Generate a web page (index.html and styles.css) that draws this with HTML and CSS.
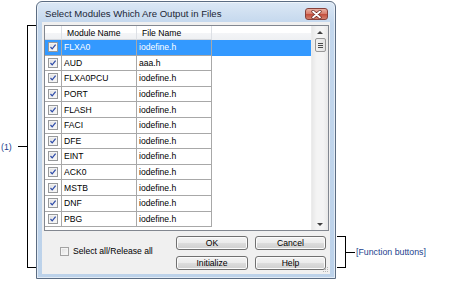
FILE: index.html
```html
<!DOCTYPE html>
<html lang="en">
<head>
  <meta charset="UTF-8" />
  <title>Select Modules Which Are Output in Files</title>
  <link rel="stylesheet" href="styles.css">
</head>
<body>
  <div class="page">
    <div class="note-left">
      <span class="note-text">(1)</span>
      <span class="tick"></span>
      <span class="bracket bracket-left"></span>
    </div>

    <div class="dialog">
      <div class="titlebar">
        <span class="title">Select Modules Which Are Output in Files</span>
        <span class="close-btn">
          <svg width="11" height="9" viewBox="0 0 11 9">
            <path d="M2 1.5 L9 7.5 M9 1.5 L2 7.5" stroke="#6b2a24" stroke-width="3.2" stroke-linecap="round"/>
            <path d="M2 1.5 L9 7.5 M9 1.5 L2 7.5" stroke="#ffffff" stroke-width="1.8" stroke-linecap="round"/>
          </svg>
        </span>
      </div>

      <div class="client">
        <div class="listbox">
          <div class="grid">
            <div class="row head">
              <span class="cell chk"></span>
              <span class="cell">Module Name</span>
              <span class="cell">File Name</span>
            </div>
            <div class="row selected">
              <span class="cell chk"><span class="check on"></span></span>
              <span class="cell">FLXA0</span>
              <span class="cell">iodefine.h</span>
            </div>
            <div class="row">
              <span class="cell chk"><span class="check on"></span></span>
              <span class="cell">AUD</span>
              <span class="cell">aaa.h</span>
            </div>
            <div class="row">
              <span class="cell chk"><span class="check on"></span></span>
              <span class="cell">FLXA0PCU</span>
              <span class="cell">iodefine.h</span>
            </div>
            <div class="row">
              <span class="cell chk"><span class="check on"></span></span>
              <span class="cell">PORT</span>
              <span class="cell">iodefine.h</span>
            </div>
            <div class="row">
              <span class="cell chk"><span class="check on"></span></span>
              <span class="cell">FLASH</span>
              <span class="cell">iodefine.h</span>
            </div>
            <div class="row">
              <span class="cell chk"><span class="check on"></span></span>
              <span class="cell">FACI</span>
              <span class="cell">iodefine.h</span>
            </div>
            <div class="row">
              <span class="cell chk"><span class="check on"></span></span>
              <span class="cell">DFE</span>
              <span class="cell">iodefine.h</span>
            </div>
            <div class="row">
              <span class="cell chk"><span class="check on"></span></span>
              <span class="cell">EINT</span>
              <span class="cell">iodefine.h</span>
            </div>
            <div class="row">
              <span class="cell chk"><span class="check on"></span></span>
              <span class="cell">ACK0</span>
              <span class="cell">iodefine.h</span>
            </div>
            <div class="row">
              <span class="cell chk"><span class="check on"></span></span>
              <span class="cell">MSTB</span>
              <span class="cell">iodefine.h</span>
            </div>
            <div class="row">
              <span class="cell chk"><span class="check on"></span></span>
              <span class="cell">DNF</span>
              <span class="cell">iodefine.h</span>
            </div>
            <div class="row">
              <span class="cell chk"><span class="check on"></span></span>
              <span class="cell">PBG</span>
              <span class="cell">iodefine.h</span>
            </div>
          </div>

          <div class="scrollbar">
            <span class="arrow up"></span>
            <span class="thumb"><span class="grip-line"></span><span class="grip-line"></span><span class="grip-line"></span></span>
            <span class="track"></span>
            <span class="arrow down"></span>
          </div>
        </div>

        <div class="footer">
          <label class="select-all"><span class="check off"></span><span>Select all/Release all</span></label>
          <div class="buttons">
            <button class="btn">OK</button>
            <button class="btn">Cancel</button>
            <button class="btn">Initialize</button>
            <button class="btn">Help</button>
          </div>
        </div>

        <span class="resize-grip">
          <svg width="6" height="6" viewBox="0 0 6 6" fill="#b4b4b4">
            <rect x="4" y="0" width="1" height="1"/>
            <rect x="2" y="2" width="1" height="1"/><rect x="4" y="2" width="1" height="1"/>
            <rect x="0" y="4" width="1" height="1"/><rect x="2" y="4" width="1" height="1"/><rect x="4" y="4" width="1" height="1"/>
          </svg>
        </span>
      </div>
    </div>

    <div class="note-right">
      <span class="bracket bracket-right"></span>
      <span class="tick"></span>
      <span class="note-text">[Function buttons]</span>
    </div>
  </div>
</body>
</html>
```

FILE: styles.css
```css
body {
  margin: 0;
  background-color: #ffffff;
  font-family: 'Liberation Sans', Arial, sans-serif;
  font-size: 8.6px;
  color: #000000;
}

.page {
  display: flex;
  align-items: flex-start;
  width: 474px;
  height: 282px;
  overflow: hidden;
}

/* annotations */

.note-left {
  display: flex;
  align-items: center;
  width: 36px;
  height: 243px;
  margin-top: 25px;
  flex-shrink: 0;
}

.note-left .note-text {
  width: 18px;
  padding-left: 1px;
  box-sizing: border-box;
}

.note-text {
  color: #1c3f8e;
  font-size: 8.8px;
  white-space: nowrap;
}

.tick {
  width: 9px;
  height: 1px;
  background-color: #000000;
  flex-shrink: 0;
}

.bracket {
  width: 9px;
  height: 100%;
  box-sizing: border-box;
  border: 1px solid #000000;
  flex-shrink: 0;
}

.bracket-left {
  border-right: none;
}

.bracket-right {
  border-left: none;
}

.note-right {
  display: flex;
  align-items: center;
  height: 32px;
  margin-top: 236px;
  margin-left: 1px;
}

.note-right .note-text {
  margin-left: 1px;
}

/* dialog frame */

.dialog {
  width: 300px;
  height: 278px;
  margin-top: 1px;
  box-sizing: border-box;
  border: 1px solid #5b6c82;
  border-radius: 6px 6px 0 0;
  background: linear-gradient(#dce8f5, #c3d7ed 22px, #bcd2ea);
  box-shadow: inset 0 0 0 1px rgba(255, 255, 255, 0.55);
  padding: 0 5px 4px 5px;
  display: flex;
  flex-direction: column;
  flex-shrink: 0;
}

.titlebar {
  height: 20px;
  display: flex;
  align-items: flex-start;
  justify-content: space-between;
  flex-shrink: 0;
}

.title {
  margin-top: 6px;
  margin-left: 3px;
  font-size: 9.6px;
  color: #1b2636;
  white-space: nowrap;
}

.close-btn {
  width: 23px;
  height: 12px;
  margin-top: 6px;
  margin-right: 2px;
  box-sizing: border-box;
  border: 1px solid #86403a;
  border-radius: 3px;
  background: linear-gradient(#eab0a2, #d9806f 45%, #c4503f 55%, #d3806e);
  display: flex;
  align-items: center;
  justify-content: center;
}

.client {
  flex: 1;
  position: relative;
  background-color: #f0f0f0;
  display: flex;
  flex-direction: column;
  padding: 3px 1px 0 2px;
}

/* list */

.listbox {
  height: 206px;
  box-sizing: border-box;
  border: 1px solid #828790;
  background-color: #ffffff;
  display: flex;
}

.grid {
  flex: 1;
}

.row {
  display: grid;
  grid-template-columns: 17px 75px 75px;
  height: 15.6px;
  box-sizing: border-box;
}

.cell {
  display: flex;
  align-items: center;
  box-sizing: border-box;
  border-right: 1px solid #a8a8a8;
  border-bottom: 1px solid #a8a8a8;
  padding-left: 2px;
  white-space: nowrap;
  overflow: hidden;
}

.cell.chk {
  padding-left: 3px;
}

.row.head {
  height: 14px;
  background: linear-gradient(#ffffff, #ffffff 50%, #f4f5f7 50%, #eef0f3);
}

.row.head .cell {
  border-right-color: #dde0e5;
  border-bottom-color: #d5d8dd;
  padding-left: 5px;
}

.row.selected {
  background-color: #3399ff;
  color: #ffffff;
}

.check {
  width: 10px;
  height: 10px;
  box-sizing: border-box;
  border: 1px solid #97999b;
  background: linear-gradient(135deg, #dedede, #fbfbfb);
  box-shadow: inset 0 0 0 1px #f4f4f4;
  flex-shrink: 0;
}

.check.on {
  background-image: url("data:image/svg+xml,%3Csvg xmlns='http://www.w3.org/2000/svg' width='8' height='8' viewBox='0 0 8 8'%3E%3Cpath d='M1.5 4 L3.2 5.9 L6.6 1.7' fill='none' stroke='%232c4aa8' stroke-width='1.2'/%3E%3C/svg%3E"), linear-gradient(135deg, #dedede, #fbfbfb);
  background-repeat: no-repeat;
  background-position: center;
}

/* scrollbar */

.scrollbar {
  width: 16px;
  display: flex;
  flex-direction: column;
  align-items: center;
  background: linear-gradient(90deg, #e8e8e8, #f4f4f4 30%, #f4f4f4 70%, #e8e8e8);
  border-left: 1px solid #ececec;
}

.arrow {
  width: 0;
  height: 0;
  border-left: 3px solid transparent;
  border-right: 3px solid transparent;
  flex-shrink: 0;
}

.arrow.up {
  margin-top: 5px;
  border-bottom: 3px solid #404040;
}

.arrow.down {
  margin-bottom: 4px;
  border-top: 3px solid #404040;
}

.thumb {
  width: 11px;
  height: 14px;
  margin-top: 4px;
  box-sizing: border-box;
  border: 1px solid #979797;
  border-radius: 2px;
  background: linear-gradient(90deg, #f1f1f1, #e2e2e2);
  display: flex;
  flex-direction: column;
  align-items: center;
  justify-content: center;
  gap: 1px;
}

.grip-line {
  width: 5px;
  height: 1px;
  background-color: #4a4a4a;
}

.track {
  flex: 1;
}

/* footer */

.footer {
  flex: 1;
  display: flex;
  align-items: flex-start;
  padding: 5px 3px 0 0;
}

.select-all {
  flex: 1;
  display: flex;
  align-items: center;
  gap: 4px;
  padding-left: 16px;
  margin-top: 10px;
  white-space: nowrap;
}

.check.off {
  width: 9px;
  height: 9px;
  border-color: #a3a3a3;
}

.buttons {
  display: grid;
  grid-template-columns: 72px 71px;
  grid-template-rows: 14px 14px;
  column-gap: 7px;
  row-gap: 6px;
}

.btn {
  margin: 0;
  padding: 0;
  font-family: 'Liberation Sans', Arial, sans-serif;
  font-size: 8.6px;
  color: #000000;
  border: 1px solid #707070;
  border-radius: 3px;
  background: linear-gradient(#f3f3f3, #ebebeb 50%, #dddddd 50%, #cfcfcf);
  box-shadow: inset 0 0 0 1px #fbfbfb;
  line-height: 12px;
}

.resize-grip {
  position: absolute;
  right: 1px;
  bottom: 1px;
  line-height: 0;
}
```
